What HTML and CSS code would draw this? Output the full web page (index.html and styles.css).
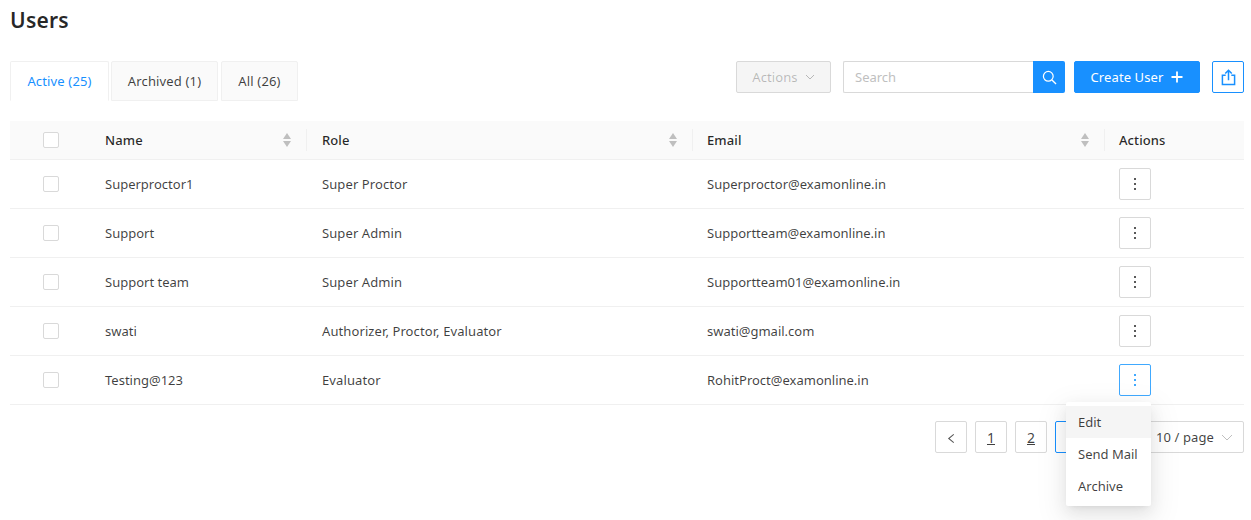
FILE: index.html
```html
<!DOCTYPE html>
<html lang="en">
<head>
<meta charset="utf-8">
<title>Users</title>
<link rel="stylesheet" href="styles.css">
</head>
<body>
<main class="page">
  <h1 class="title">Users</h1>
  <div class="toolbar">
    <div class="tabs">
      <div class="tab tab-active">Active (25)</div>
      <div class="tab tab-archived">Archived (1)</div>
      <div class="tab tab-all">All (26)</div>
    </div>
    <div class="tools">
      <button class="btn-actions">Actions
        <svg class="chev" viewBox="0 0 10 6" width="10" height="6"><path d="M1 1l4 4 4-4" fill="none" stroke="currentColor"/></svg>
      </button>
      <div class="search">
        <div class="search-input">Search</div>
        <div class="search-btn">
          <svg viewBox="0 0 16 16" width="15" height="15"><circle cx="6.7" cy="6.7" r="5.2" fill="none" stroke="#fff" stroke-width="1.3"/><path d="M10.6 10.6l4.4 4.4" stroke="#fff" stroke-width="1.4"/></svg>
        </div>
      </div>
      <button class="btn-create">Create User
        <svg viewBox="0 0 12 12" width="12" height="12"><path d="M6 0.5v11M0.5 6h11" stroke="#fff" stroke-width="1.800"/></svg>
      </button>
      <button class="btn-export">
        <svg viewBox="0 0 16 18" width="15" height="17"><path d="M5 6.5H1.5v10h13v-10H11" fill="none" stroke="#1890ff" stroke-width="1.6"/><path d="M8 12V1.5M4.500 4.800L8 1.300l3.500 3.500" fill="none" stroke="#1890ff" stroke-width="1.6"/></svg>
      </button>
    </div>
  </div>

  <div class="table">
    <div class="row head">
      <div class="c-check"><span class="checkbox"></span></div>
      <div class="c-name cell">Name <span class="sorter"><i class="up"></i><i class="down"></i></span></div>
      <div class="c-role cell divided">Role <span class="sorter"><i class="up"></i><i class="down"></i></span></div>
      <div class="c-email cell divided">Email <span class="sorter"><i class="up"></i><i class="down"></i></span></div>
      <div class="c-act cell divided">Actions</div>
    </div>
    <div class="row">
      <div class="c-check"><span class="checkbox"></span></div>
      <div class="c-name cell">Superproctor1</div>
      <div class="c-role cell role-text">Super Proctor</div>
      <div class="c-email cell">Superproctor@examonline.in</div>
      <div class="c-act cell"><button class="more"><i></i><i></i><i></i></button></div>
    </div>
    <div class="row">
      <div class="c-check"><span class="checkbox"></span></div>
      <div class="c-name cell">Support</div>
      <div class="c-role cell role-text">Super Admin</div>
      <div class="c-email cell">Supportteam@examonline.in</div>
      <div class="c-act cell"><button class="more"><i></i><i></i><i></i></button></div>
    </div>
    <div class="row">
      <div class="c-check"><span class="checkbox"></span></div>
      <div class="c-name cell">Support team</div>
      <div class="c-role cell role-text">Super Admin</div>
      <div class="c-email cell">Supportteam01@examonline.in</div>
      <div class="c-act cell"><button class="more"><i></i><i></i><i></i></button></div>
    </div>
    <div class="row">
      <div class="c-check"><span class="checkbox"></span></div>
      <div class="c-name cell">swati</div>
      <div class="c-role cell role-text">Authorizer, Proctor, Evaluator</div>
      <div class="c-email cell">swati@gmail.com</div>
      <div class="c-act cell"><button class="more"><i></i><i></i><i></i></button></div>
    </div>
    <div class="row">
      <div class="c-check"><span class="checkbox"></span></div>
      <div class="c-name cell">Testing@123</div>
      <div class="c-role cell role-text">Evaluator</div>
      <div class="c-email cell">RohitProct@examonline.in</div>
      <div class="c-act cell menu-anchor">
        <button class="more more-open"><i></i><i></i><i></i></button>
        <div class="menu">
          <div class="menu-item menu-item-hover">Edit</div>
          <div class="menu-item">Send Mail</div>
          <div class="menu-item">Archive</div>
        </div>
      </div>
    </div>
  </div>

  <div class="pagination">
    <span class="pg pg-prev"><svg viewBox="0 0 8 12" width="8" height="11"><path d="M7 1.500L1.500 6 7 10.500" fill="none" stroke="#555" stroke-width="1.100"/></svg></span>
    <span class="pg"><u>1</u></span>
    <span class="pg"><u>2</u></span>
    <span class="pg pg-current"></span>
    <span class="pg"></span>
    <span class="pg-size">10 / page
      <svg viewBox="0 0 12 7" width="12" height="7"><path d="M1 1l5 5 5-5" fill="none" stroke="#bfbfbf"/></svg>
    </span>
  </div>
</main>
</body>
</html>
```

FILE: styles.css
```css
* { box-sizing: border-box; }
html, body { margin: 0; padding: 0; background: #fff; }
body {
  font-family: "Noto Sans", "Open Sans", "Liberation Sans", sans-serif;
  font-size: 13px;
  color: rgba(0, 0, 0, 0.75);
  overflow: hidden;
  height: 520px;
}
.page { padding: 0 7px 0 10px; }
.title {
  margin: 0;
  height: 61px;
  padding-top: 5px;
  font-size: 21px;
  letter-spacing: 0.2px;
  line-height: 30px;
  font-weight: 600;
  color: rgba(0, 0, 0, 0.85);
}
.toolbar { display: flex; justify-content: space-between; height: 60px; }
.tabs { display: flex; gap: 2px; height: 40px; }
.tab {
  height: 40px;
  padding: 0 16px;
  line-height: 39px;
  letter-spacing: 0.15px;
  background: #fafafa;
  border: 1px solid #f0f0f0;
  border-radius: 2px 2px 0 0;
  text-align: center;
}
.tab-active {
  width: 99px;
  padding: 0;
  color: #1890ff;
  background: #fff;
  border-bottom-color: #fff;
}
.tab-archived { width: 107px; padding: 0; }
.tab-all { width: 77px; padding: 0; margin-left: 1px; }
.tools { display: flex; align-items: flex-start; }
.tools button { font-family: inherit; font-size: 13px; letter-spacing: 0.1px; }
.btn-actions {
  width: 95px;
  height: 32px;
  margin-right: 12px;
  background: #f5f5f5;
  border: 1px solid #d9d9d9;
  border-radius: 2px;
  color: rgba(0, 0, 0, 0.25);
  display: flex;
  align-items: center;
  justify-content: center;
  gap: 7px;
  padding: 0;
}
.search { display: flex; width: 222px; height: 32px; margin-right: 9px; }
.search-input {
  flex: 1;
  border: 1px solid #d9d9d9;
  border-right: 0;
  border-radius: 2px 0 0 2px;
  padding: 0 11px;
  line-height: 30px;
  color: #bfbfbf;
}
.search-btn {
  width: 32px;
  background: #1890ff;
  border-radius: 0 2px 2px 0;
  display: flex;
  align-items: center;
  justify-content: center;
}
.btn-create {
  width: 126px;
  height: 32px;
  margin-right: 12px;
  background: #1890ff;
  border: 1px solid #1890ff;
  border-radius: 2px;
  color: #fff;
  display: flex;
  align-items: center;
  justify-content: center;
  gap: 8px;
  padding: 0;
}
.btn-export {
  width: 32px;
  height: 32px;
  background: #fff;
  border: 1px solid #1890ff;
  border-radius: 2px;
  display: flex;
  align-items: center;
  justify-content: center;
  padding: 0;
}
.table { width: 1234px; }
.row {
  display: flex;
  align-items: center;
  height: 49px;
  border-bottom: 1px solid #f0f0f0;
}
.head {
  height: 39px;
  background: #fafafa;
  font-weight: 500;
  letter-spacing: 0.1px;
  color: rgba(0, 0, 0, 0.85);
}
.c-check { width: 82px; padding-left: 33px; display: flex; }
.c-name { width: 214px; }
.c-role { width: 386px; }
.c-email { width: 412px; }
.c-act { width: 140px; }
.cell {
  padding-left: 15px;
  position: relative;
  display: flex;
  align-items: center;
  height: 100%;
}
.c-name.cell { padding-left: 13px; }
.c-role.cell { padding-left: 16px; }
.role-text { letter-spacing: 0.1px; }
.divided::before {
  content: "";
  position: absolute;
  left: 0;
  top: 50%;
  height: 22px;
  margin-top: -11px;
  width: 1px;
  background: #f0f0f0;
}
.checkbox {
  width: 16px;
  height: 16px;
  background: #fff;
  border: 1px solid #d9d9d9;
  border-radius: 2px;
  display: block;
}
.sorter {
  position: absolute;
  right: 15px;
  top: 50%;
  margin-top: -7px;
  display: flex;
  flex-direction: column;
  gap: 2px;
}
.sorter i { display: block; width: 0; height: 0; border-left: 4.500px solid transparent; border-right: 4.500px solid transparent; }
.sorter .up { border-bottom: 6px solid #bfbfbf; }
.sorter .down { border-top: 6px solid #bfbfbf; }
.more {
  width: 32px;
  height: 32px;
  background: #fff;
  border: 1px solid #d9d9d9;
  border-radius: 2px;
  display: flex;
  flex-direction: column;
  align-items: center;
  justify-content: center;
  gap: 3px;
  padding: 0;
}
.more i { display: block; width: 2px; height: 2px; background: rgba(0, 0, 0, 0.65); }
.more-open { border-color: #40a9ff; }
.more-open i { background: #40a9ff; }
.menu-anchor { overflow: visible; }
.menu {
  position: absolute;
  left: -38px;
  top: 46px;
  width: 85px;
  padding: 4px 0;
  background: #fff;
  border-radius: 2px;
  box-shadow: 0 3px 6px -4px rgba(0,0,0,.12), 0 6px 16px rgba(0,0,0,.08), 0 9px 28px 8px rgba(0,0,0,.05);
  z-index: 5;
}
.menu-item { height: 32px; line-height: 32px; padding: 0 12px; color: rgba(0,0,0,.75); }
.menu-item-hover { background: #f5f5f5; }
.pagination {
  display: flex;
  justify-content: flex-end;
  align-items: flex-start;
  margin-top: 16px;
  width: 1234px;
  gap: 8px;
}
.pg {
  width: 32px;
  height: 32px;
  border: 1px solid #d9d9d9;
  border-radius: 2px;
  display: flex;
  align-items: center;
  justify-content: center;
  background: #fff;
  font-size: 14px;
}
.pg-prev { padding-top: 2px; }
.pg-current { border-color: #1890ff; }
.pg-size {
  width: 109px;
  height: 32px;
  border: 1px solid #d9d9d9;
  border-radius: 2px;
  display: flex;
  align-items: center;
  justify-content: space-between;
  padding: 0 10px 0 20px;
  background: #fff;
  white-space: nowrap;
  letter-spacing: 0.1px;
}
```
